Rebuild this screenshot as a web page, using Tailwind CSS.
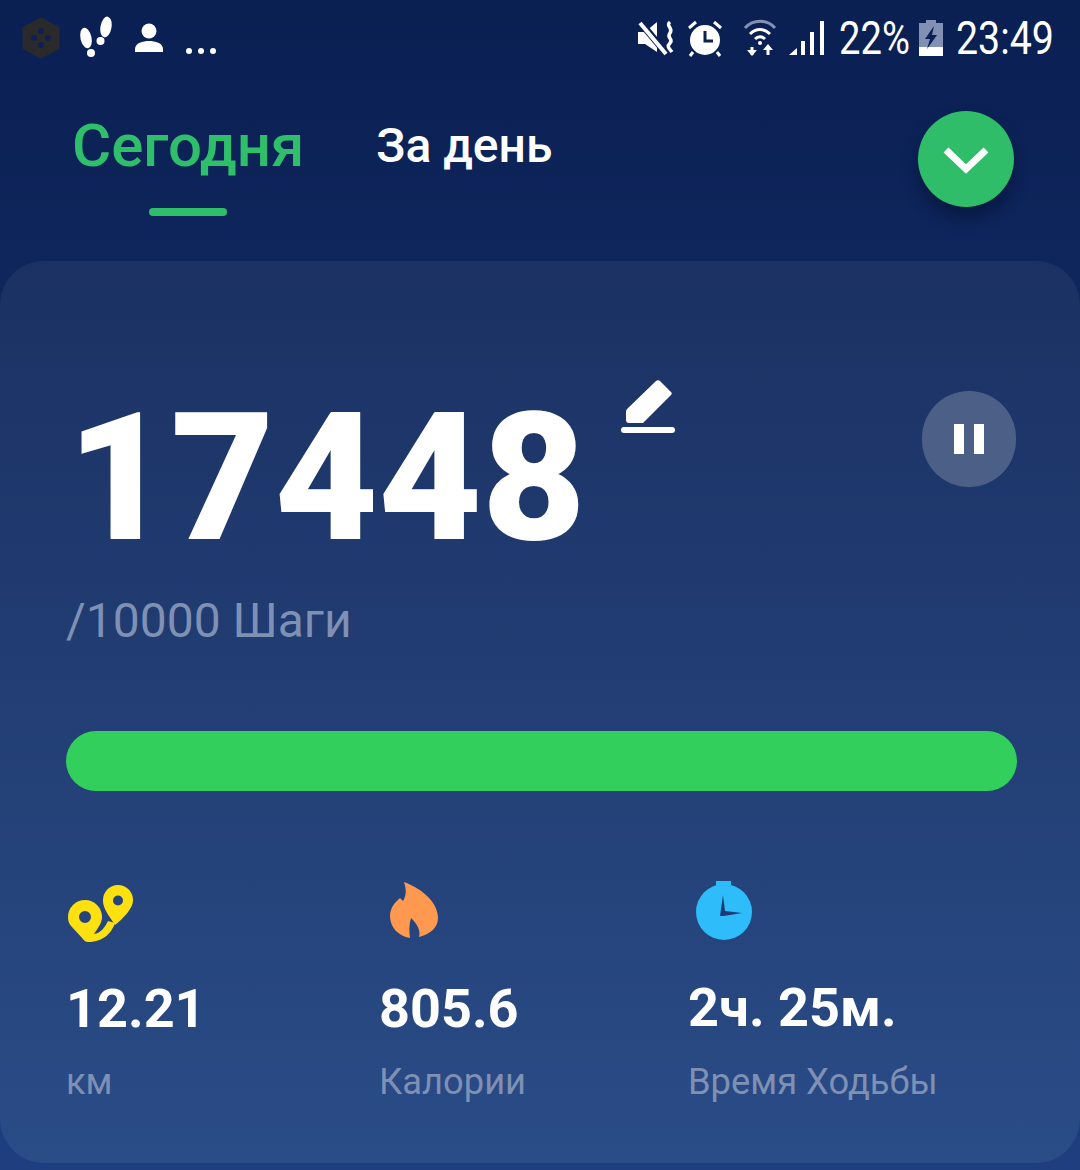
<!doctype html>
<html><head><meta charset="utf-8"><script src="https://cdn.jsdelivr.net/npm/@tailwindcss/browser@4"></script></head>
<body class="m-0">
<div class="w-[1080px] h-[1170px] overflow-hidden flex flex-col bg-gradient-to-b from-[#0a1f52] to-[#1f3e80] font-['Roboto',sans-serif] text-white">
  <!-- status bar -->
  <div class="h-[76px] shrink-0 flex items-center justify-between pl-[21px] pr-[27px]">
    <div class="flex items-center">
      <svg width="40" height="42" viewBox="0 0 40 42"><path d="M20 2 37 11V31L20 40 3 31V11Z" fill="#2a2a2c" stroke="#2a2a2c" stroke-width="3" stroke-linejoin="round"/><g fill="#0e2050"><circle cx="20" cy="14" r="3"/><circle cx="20" cy="28" r="3"/><circle cx="13" cy="21" r="3"/><circle cx="27" cy="21" r="3"/></g></svg>
      <svg class="ml-[17px]" width="36" height="44" viewBox="0 0 36 44" fill="#fff"><ellipse cx="28" cy="11" rx="5.5" ry="10.5" transform="rotate(10 28 11)"/><ellipse cx="22.500" cy="25" rx="4" ry="4" /><ellipse cx="8" cy="22" rx="5.500" ry="10.500" transform="rotate(-12 8 22)"/><ellipse cx="13" cy="37" rx="4" ry="4"/></svg>
      <svg class="ml-[20px] -mt-[1px]" width="30" height="30" viewBox="0 0 30 30" fill="#fff"><circle cx="15" cy="8" r="7.500"/><path d="M1 29v-3c0-6 8-8 14-8s14 2 14 8v3Z"/></svg>
      <div class="ml-[22px] flex gap-[6px] mt-[26px]"><i class="block w-[6px] h-[6px] rounded-full bg-white"></i><i class="block w-[6px] h-[6px] rounded-full bg-white"></i><i class="block w-[6px] h-[6px] rounded-full bg-white"></i></div>
    </div>
    <div class="flex items-center">
      <svg width="40" height="36" viewBox="0 0 40 36" fill="#fff"><path d="M1 12h7L20 2v30L8 24H1Z"/><path d="M3 2 29 33" stroke="#0a1f52" stroke-width="7"/><path d="M3 3 29 34" stroke="#fff" stroke-width="4"/><path d="M20 4 26 0V26Z" fill="#0a1f52"/><path d="M33 2c-5 4 4 6 0 11s4 6 0 10 0 6 2 9" fill="none" stroke="#fff" stroke-width="3.500"/></svg>
      <svg class="ml-[9px]" width="38" height="38" viewBox="0 0 38 38"><circle cx="19" cy="21" r="15" fill="#fff"/><path d="M19 12v10h8" fill="none" stroke="#0b2054" stroke-width="3"/><path d="M3 9 10 3M35 9l-7-6M7 33l-3 4M31 33l3 4" stroke="#fff" stroke-width="3"/></svg>
      <svg class="ml-[19px]" width="34" height="38" viewBox="0 0 34 38" fill="none" stroke-width="3"><path d="M2 9c8-9 22-9 30 0" stroke="#8291b3"/><path d="M7 15c6-6 14-6 20 0M12 20c3-3 7-3 10 0" stroke="#fff"/><circle cx="17" cy="24" r="2" fill="#fff" stroke="none"/><path d="M9 28v8M25 36v-9" stroke="#fff"/><path d="M4 31h10l-5 6ZM20 31h10l-5-6Z" fill="#fff" stroke="none"/></svg>
      <svg class="ml-[12px]" width="38" height="38" viewBox="0 0 38 38" fill="#fff"><path d="M0 36 8 29V36Z"/><rect x="12" y="22" width="4" height="14"/><rect x="21" y="13" width="4" height="23"/><rect x="31" y="2" width="4" height="34"/></svg>
      <span class="ml-[12px] text-[46px] leading-none scale-x-[.83] origin-left w-[72px] whitespace-nowrap">22%</span>
      <svg class="ml-[8px]" width="24" height="36" viewBox="0 0 24 36"><rect x="7" y="0" width="10" height="3" fill="#8291b3"/><rect x="0" y="3" width="24" height="33" fill="#8291b3"/><rect x="0" y="27" width="24" height="9" fill="#fff"/><path d="M15 6 6 19h5l-3 10 10-14h-5Z" fill="#0b2054"/></svg>
      <span class="ml-[13px] text-[46px] leading-none scale-x-[.855] origin-left w-[97px] whitespace-nowrap">23:49</span>
    </div>
  </div>
  <!-- tabs -->
  <div class="h-[185px] shrink-0 flex items-start pl-[72px] pr-[66px] justify-between">
    <div class="flex">
      <div class="flex flex-col items-center">
        <span class="text-[60px] font-medium leading-[64px] mt-[38px] text-[#2fbf6b]">Сегодня</span>
        <i class="block w-[78px] h-[8px] mt-[30px] rounded-full bg-[#2fbf6b]"></i>
      </div>
      <span class="ml-[72px] mt-[42px] text-[48px] font-medium leading-[56px]">За день</span>
    </div>
    <div class="w-[96px] h-[96px] mt-[35px] rounded-full bg-[#2fbd69] shadow-[0_10px_16px_rgba(0,10,40,.45)] flex items-center justify-center">
      <svg width="46" height="30" viewBox="0 0 46 30"><path d="M3 6 23 25 43 6" fill="none" stroke="#fff" stroke-width="7"/></svg>
    </div>
  </div>
  <!-- card -->
  <div class="h-[902px] shrink-0 rounded-[44px] bg-gradient-to-b from-[#1b3163] to-[#2a4c87] relative pl-[66px] pr-[63px]">
    <div class="flex justify-between h-[378px]">
      <div>
        <div class="flex items-start pt-[118px]">
          <span class="text-[179px] font-black leading-[180px] mt-[9px] ml-[1px]">17448</span>
          <svg class="ml-[35px]" width="56" height="56" viewBox="0 0 56 56" fill="#fff"><path d="M6 30 35 2c1-1 3-1 4 0l11 11c1 1 1 2 0 3L22 44H8c-2 0-3-1-3-3V32Z"/><rect x="0" y="48" width="54" height="6" rx="3"/></svg>
        </div>
        <div class="text-[48px] leading-[56px] text-[#7f90b5] mt-[25px]">/10000 Шаги</div>
      </div>
      <div class="w-[94px] h-[96px] mt-[130px] mr-[1px] rounded-full bg-[#4c6087] flex items-center justify-center gap-[10px]">
        <i class="block w-[10px] h-[30px] bg-white"></i><i class="block w-[10px] h-[30px] bg-white"></i>
      </div>
    </div>
    <div class="h-[60px] mt-[92px] rounded-full bg-[#33cf5d]"></div>
    <div class="flex mt-[91px]">
      <div class="w-[313px]">
        <svg width="66" height="60" viewBox="0 -3 66 60" class="ml-[2px]"><path fill="#fde010" fill-rule="evenodd" d="M17 15A17 17 0 0 1 34 32C34 38 30 43 26 49 33 48 37 42 40 36L47 38C44 47 36 57 20 57 18 57 16 56 15 54L4 42C1 39 0 36 0 32A17 17 0 0 1 17 15ZM17 26a6 6 0 1 0 0 12 6 6 0 0 0 0-12Z"/><path fill="#fde010" fill-rule="evenodd" d="M50 0A15 15 0 0 1 65 16C65 23 55 34 47 40 42 32 35 24 35 16A15 15 0 0 1 50 0ZM50 10.500a5 5 0 1 0 0 10 5 5 0 0 0 0-10Z"/></svg>
        <div class="text-[54px] font-bold leading-[60px] mt-[37px]">12.21</div>
      </div>
      <div class="w-[309px]">
        <svg width="48" height="60" viewBox="0 0 48 60" class="ml-[11px]"><path fill="#ff9950" d="M14 0C28 5 48 18 48 36 48 46 40 52 29 55 31 48 27 42 21 36 19 42 19 50 20 56 8 54 0 45 0 34 0 27 4 21 10 16L13 19C17 13 16 6 14 0Z"/></svg>
        <div class="text-[54px] font-bold leading-[60px] mt-[37px]">805.6</div>
      </div>
      <div class="flex-1">
        <svg width="60" height="60" viewBox="0 0 60 60" class="ml-[8px] -mt-[1px]"><path fill="#2ebcfb" d="M20 0h15v6h-15Z"/><circle cx="28" cy="31" r="28" fill="#2ebcfb"/><path d="M27 14 29 30 46 32 28 35H24Z" fill="#1c3c74"/></svg>
        <div class="text-[54px] font-bold leading-[60px] mt-[37px]">2ч. 25м.</div>
      </div>
    </div>
    <div class="flex mt-[23px] text-[36.3px] leading-[40px] text-[#7f90b5]">
      <div class="w-[313px]">км</div><div class="w-[309px]">Калории</div><div class="flex-1">Время Ходьбы</div>
    </div>
  </div>
</div>
</body></html>
